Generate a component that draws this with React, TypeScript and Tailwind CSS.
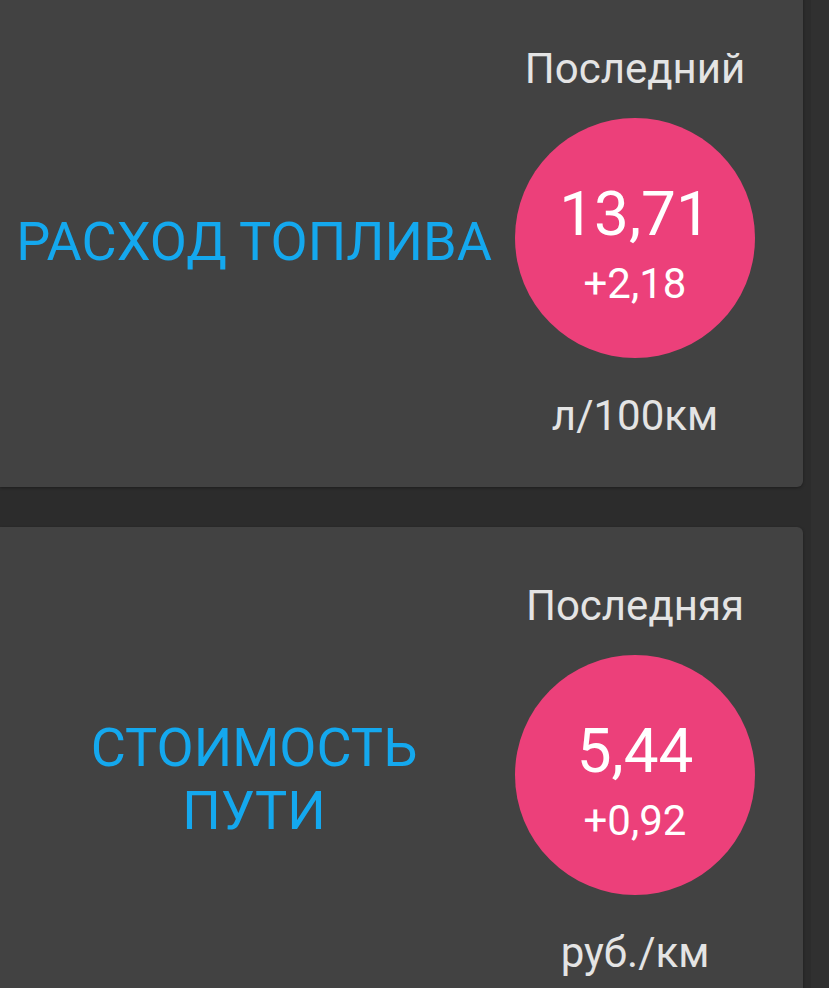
const CARDS = [
  {
    title: ["РАСХОД ТОПЛИВА"],
    label: "Последний",
    value: "13,71",
    delta: "+2,18",
    unit: "л/100км",
  },
  {
    title: ["СТОИМОСТЬ", "ПУТИ"],
    label: "Последняя",
    value: "5,44",
    delta: "+0,92",
    unit: "руб./км",
  },
];

function StatCard({ card }: { card: (typeof CARDS)[number] }) {
  return (
    <div className="flex items-center bg-[#424242] rounded-r-[6px] pr-[48px] shadow-[0_1px_3px_rgba(0,0,0,0.35)]">
      {/* ── Title ─────────────────── */}
      <div className="flex-1 pr-[7px] pt-[6px] text-center text-[54px] leading-[63px] text-[#14a8ee]">
        {card.title.map((line) => (
          <div key={line}>{line}</div>
        ))}
      </div>

      {/* ── Latest value ──────────── */}
      <div className="w-[240px] flex flex-col items-center pt-[55px] pb-[47px] text-[42px] leading-[48px] text-[#e4e4e4]">
        <div className="whitespace-nowrap">{card.label}</div>
        <div className="mt-[25px] w-[240px] h-[240px] rounded-full bg-[#ec407a] flex flex-col items-center pt-[65px] text-white">
          <div className="text-[62px] leading-[62px]">{card.value}</div>
          <div className="mt-[18px] text-[42px] leading-[42px]">{card.delta}</div>
        </div>
        <div className="mt-[34px] whitespace-nowrap">{card.unit}</div>
      </div>
    </div>
  );
}

export default function App() {
  return (
    <div
      className="h-[988px] overflow-hidden bg-[#2c2c2c] flex"
      style={{ fontFamily: "Roboto, 'Noto Sans', sans-serif" }}
    >
      <div className="w-[803px] -mt-[10px] flex flex-col gap-[40px]">
        {CARDS.map((card) => (
          <StatCard key={card.label} card={card} />
        ))}
      </div>
      <div className="w-[8px]" />
      <div className="flex-1 bg-[#303030]" />
    </div>
  );
}
